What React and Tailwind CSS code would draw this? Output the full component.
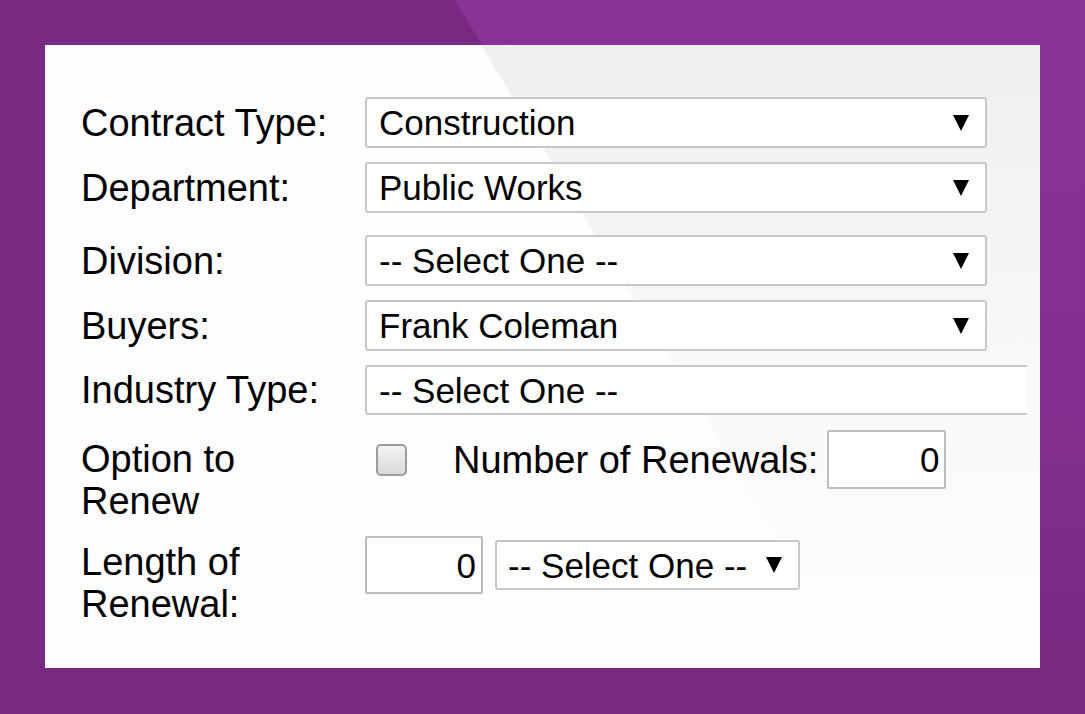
import React from 'react';

const Caret = () => (
  <svg width="16" height="16" viewBox="0 0 16 16" className="shrink-0">
    <path d="M0 0H16L8 16Z" fill="#000" />
  </svg>
);

const SelectBox = ({ value, className = '' }) => (
  <div
    className={`flex items-center justify-between border-2 border-[#c8c8c8] rounded-[3px] bg-white text-[35px] leading-none ${className}`}
  >
    <span className="whitespace-nowrap">{value}</span>
    <Caret />
  </div>
);

const NumberBox = ({ value, className = '' }) => (
  <div
    className={`flex items-center justify-end border-2 border-[#bdbdbd] rounded-[2px] bg-white text-[35px] leading-none pr-[5px] ${className}`}
  >
    {value}
  </div>
);

const Label = ({ children, className = '' }) => (
  <div className={`w-[256px] mr-[28px] shrink-0 text-[38px] leading-[42px] ${className}`}>{children}</div>
);

export default function App() {
  return (
    <div className="w-full h-[714px] p-[45px] bg-[linear-gradient(to_bottom,rgba(120,42,131,0)_0%,rgba(120,42,131,0.35)_55%,#782a83_92%),linear-gradient(59deg,#782a83_58.4%,#8a3397_58.4%)] font-['Liberation_Sans',Arial,sans-serif] text-black">
      <div className="w-[995px] h-[623px] overflow-hidden pl-[36px] pt-[52px] pr-[13px] bg-[linear-gradient(to_bottom,rgba(253,252,254,0)_0%,rgba(253,252,254,0.7)_55%,#fdfcfe_90%),linear-gradient(59deg,#fdfcfe_59.2%,#efeef0_59.2%)]">
        {/* Contract Type */}
        <div className="flex items-center">
          <Label>Contract Type:</Label>
          <SelectBox value="Construction" className="w-[622px] h-[51px] pl-[12px] pr-[16px]" />
        </div>
        {/* Department */}
        <div className="flex items-center mt-[14px]">
          <Label>Department:</Label>
          <SelectBox value="Public Works" className="w-[622px] h-[51px] pl-[12px] pr-[16px]" />
        </div>
        {/* Division */}
        <div className="flex items-center mt-[22px]">
          <Label>Division:</Label>
          <SelectBox value="-- Select One --" className="w-[622px] h-[51px] pl-[12px] pr-[16px]" />
        </div>
        {/* Buyers */}
        <div className="flex items-center mt-[14px]">
          <Label>Buyers:</Label>
          <SelectBox value="Frank Coleman" className="w-[622px] h-[51px] pl-[12px] pr-[16px]" />
        </div>
        {/* Industry Type - runs past the panel edge */}
        <div className="flex items-center mt-[14px]">
          <Label>Industry Type:</Label>
          <div className="flex-1 h-[50px] flex items-center border-2 border-r-0 border-[#c8c8c8] rounded-l-[3px] bg-white text-[35px] leading-none pl-[12px]">
            -- Select One --
          </div>
        </div>
        {/* Option to Renew */}
        <div className="flex items-start mt-[15px]">
          <Label className="pt-[8px]">Option to Renew</Label>
          <div className="flex items-center h-[59px]">
            <div className="ml-[11px] w-[31px] h-[32px] rounded-[5px] border-2 border-[#9c9c9c] bg-[linear-gradient(to_bottom,#f2f2f2,#dadada)]" />
            <span className="ml-[46px] text-[38px] leading-none whitespace-nowrap">Number of Renewals:</span>
            <NumberBox value="0" className="ml-[9px] w-[119px] h-[59px]" />
          </div>
        </div>
        {/* Length of Renewal */}
        <div className="flex items-start mt-[14px]">
          <Label className="pt-[5px]">Length of Renewal:</Label>
          <div className="flex items-center h-[58px]">
            <NumberBox value="0" className="w-[118px] h-[58px]" />
            <SelectBox value="-- Select One --" className="ml-[12px] w-[305px] h-[50px] pl-[11px] pr-[16px]" />
          </div>
        </div>
      </div>
    </div>
  );
}
